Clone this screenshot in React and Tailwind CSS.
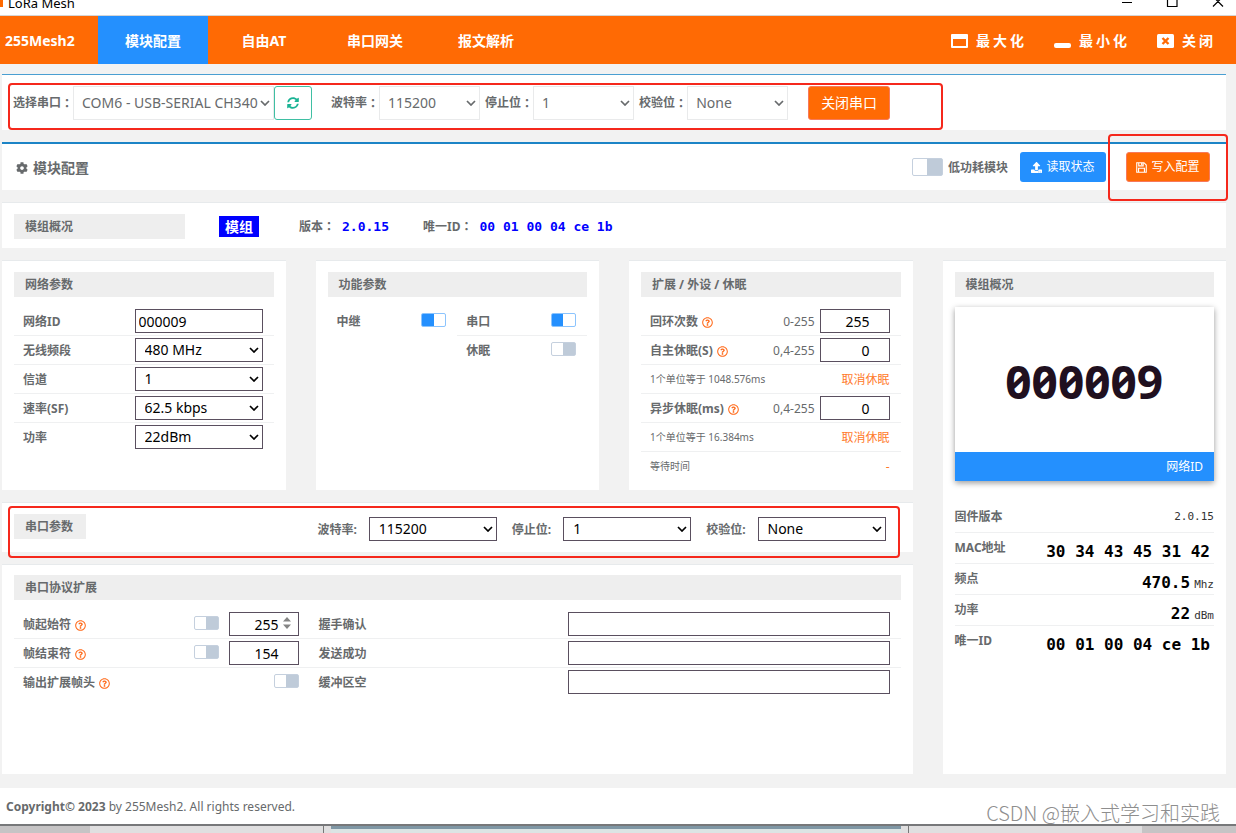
import { FaCog, FaRegQuestionCircle, FaSyncAlt, FaUpload } from "react-icons/fa";
import clsx from "clsx";

const TABS = ["模块配置", "自由AT", "串口网关", "报文解析"];

const NETWORK_SELECTS = [
  { id: "band", label: "无线频段", value: "480 MHz" },
  { id: "channel", label: "信道", value: "1" },
  { id: "rate", label: "速率(SF)", value: "62.5 kbps" },
  { id: "power", label: "功率", value: "22dBm" },
];

const STATUS = [
  { label: "固件版本", small: "2.0.15" },
  { label: "MAC地址", value: "30 34 43 45 31 42" },
  { label: "频点", value: "470.5", small: "Mhz" },
  { label: "功率", value: "22", small: "dBm" },
  { label: "唯一ID", value: "00 01 00 04 ce 1b" },
];

function Chevron({ className }) {
  return (
    <svg viewBox="0 0 10 6" className={clsx("pointer-events-none absolute h-[6px] w-[10px]", className)}>
      <path d="M1 1l4 4 4-4" fill="none" stroke="currentColor" strokeWidth="1.7" />
    </svg>
  );
}

// Light select used in the port toolbar
function PortSelect({ id, value, className }) {
  return (
    <div className={clsx("relative", className)}>
      <select
        id={id}
        className="h-[34px] w-full appearance-none border border-[#e9eaeb] bg-white pl-2 text-sm text-[#676a6c]"
      >
        <option>{value}</option>
      </select>
      <Chevron className="right-[4px] top-[14px]" />
    </div>
  );
}

// Dark bordered select used in the parameter forms
function FormSelect({ id, value }) {
  return (
    <div className="relative w-32 text-black">
      <select
        id={id}
        className="block h-6 w-full appearance-none border border-[#5a4f5f] bg-white pl-[9px] text-sm leading-5"
      >
        <option>{value}</option>
      </select>
      <Chevron className="right-[4px] top-[9px]" />
    </div>
  );
}

function NumberInput({ id, value, spinner }) {
  return (
    <div className="relative w-[70px]">
      <input
        id={id}
        type="number"
        defaultValue={value}
        className="block h-6 w-full border border-[#5a4f5f] bg-white pr-1 text-right text-sm text-black"
      />
      {spinner && (
        <svg viewBox="0 0 8 12" className="absolute right-2 top-[5px] h-3 w-2 text-[#858585]">
          <path d="M0 4.5L4 0l4 4.5zM0 7.5L4 12l4-4.5z" fill="currentColor" />
        </svg>
      )}
    </div>
  );
}

function Switch({ id, on, large }) {
  return (
    <input
      id={id}
      type="checkbox"
      role="switch"
      defaultChecked={on}
      className={clsx(
        "block shrink-0 appearance-none rounded-[2px] border border-[#c5d0de] bg-[linear-gradient(to_right,#fff_50%,#bfcbd9_50%)] checked:border-[#8cc4fd] checked:bg-[linear-gradient(to_right,#2490fe_50%,#fff_50%)]",
        large ? "h-[18px] w-[31px]" : "mb-[2px] h-[14px] w-[25px]"
      )}
    />
  );
}

function SaveIcon() {
  return (
    <svg viewBox="0 0 12 12" className="size-[11px]" fill="none" stroke="currentColor" strokeWidth="1.2">
      <path d="M.8.8h7.900l2.500 2.500v7.900H.8zM3 .8v3.400h4.800V.8M6.200 1v2.300M2.800 11.200V6.800h6.400v4.400" />
    </svg>
  );
}

function Colon() {
  return <span className="font-['Noto_Sans_CJK_TC',sans-serif]">：</span>;
}

function Panel({ className, children }) {
  return <section className={clsx("border-t border-[#e7eaec] bg-white px-3", className)}>{children}</section>;
}

function Heading({ className, children }) {
  return (
    <h2 className={clsx("h-[25px] bg-[#eee] pl-[11px] pr-[13px] font-bold leading-[26px]", className)}>{children}</h2>
  );
}

function Row({ last, children }) {
  return (
    <div
      className={clsx(
        "flex h-[29px] items-center border-b pl-[9px] pr-[11px]",
        last ? "border-transparent" : "border-[#eff0f1]"
      )}
    >
      {children}
    </div>
  );
}

function Label({ htmlFor, help, className, children }) {
  return (
    <label htmlFor={htmlFor} className={clsx("flex items-center pt-[2px] font-bold", className)}>
      {children}
      {help && <FaRegQuestionCircle className="ml-1 size-[11px] text-[#ff6a1a]" />}
    </label>
  );
}

// Red frame that highlights a group of controls
function Frame({ className }) {
  return <div className={clsx("pointer-events-none absolute z-10 rounded-[4px] border-2 border-[#f5281c]", className)} />;
}

function TitleBar() {
  return (
    <div className="flex h-4 justify-between overflow-hidden border-b border-[#d5d5d5] bg-white">
      <div className="flex items-end gap-[5px] pb-1 text-[13px] leading-4 text-black">
        <span className="mb-1 h-2 w-[3px] bg-[#ff6a00]" />
        LoRa Mesh
      </div>
      <svg viewBox="0 0 102 8" className="mr-3 h-2 w-[102px]" fill="none" stroke="#000" strokeWidth="1.2">
        <path d="M0 2.5h10M45.500-3v9.500h9.500v-9.500M91 6.500l10-10M101 6.500l-10-10" />
      </svg>
    </div>
  );
}

function Header() {
  return (
    <header className="flex h-12 items-stretch bg-[#ff6a04] text-sm font-bold text-white">
      <div className="flex w-[98px] items-center pl-[5px] pt-[2px]">255Mesh2</div>
      <nav className="flex gap-px">
        {TABS.map((tab, i) => (
          <button key={tab} className={clsx("w-[110px] pt-[2px] font-bold", i === 0 && "bg-[#2490fe]")}>
            {tab}
          </button>
        ))}
      </nav>
      <div className="ml-auto flex items-center gap-[27px] pr-5 pt-[2px]">
        <button className="flex items-center gap-2 font-bold tracking-[3px]">
          <svg viewBox="0 0 17 14" className="h-[14px] w-[17px]">
            <path fill="currentColor" fillRule="evenodd" d="M1 0h15a1 1 0 0 1 1 1v12a1 1 0 0 1-1 1H1a1 1 0 0 1-1-1V1a1 1 0 0 1 1-1zM2 5v7h13V5z" />
          </svg>
          最大化
        </button>
        <button className="flex items-center gap-2 font-bold tracking-[3px]">
          <svg viewBox="0 0 17 14" className="h-[14px] w-[17px]">
            <rect y="9" width="17" height="5" rx="2" fill="currentColor" />
          </svg>
          最小化
        </button>
        <button className="flex items-center gap-2 font-bold tracking-[3px]">
          <svg viewBox="0 0 17 14" className="h-[14px] w-[17px]">
            <rect width="17" height="14" rx="1.500" fill="currentColor" />
            <path d="M5.500 4l6 6M11.500 4l-6 6" stroke="#ff6a04" strokeWidth="2.400" />
          </svg>
          关闭
        </button>
      </div>
    </header>
  );
}

function PortBar() {
  return (
    <section className="relative flex h-14 items-start border-t border-[#4a9fd2] bg-white pl-[11px] pt-[11px]">
      <Frame className="left-[6px] top-[8px] h-[47px] w-[935px]" />
      <Label htmlFor="port" className="h-8">选择串口<Colon /></Label>
      <PortSelect id="port" value="COM6 - USB-SERIAL CH340" className="w-[201px]" />
      <button aria-label="刷新" className="flex h-[34px] w-[38px] items-center justify-center rounded-[3px] border border-[#3fbfa3] text-[#1ab394]">
        <FaSyncAlt className="size-3" />
      </button>
      <Label htmlFor="port-baud" className="ml-[19px] h-8">波特率<Colon /></Label>
      <PortSelect id="port-baud" value="115200" className="w-[101px]" />
      <Label htmlFor="port-stop" className="ml-[5px] h-8">停止位<Colon /></Label>
      <PortSelect id="port-stop" value="1" className="w-[101px]" />
      <Label htmlFor="port-parity" className="ml-[5px] h-8">校验位<Colon /></Label>
      <PortSelect id="port-parity" value="None" className="w-[101px]" />
      <button className="ml-5 h-[34px] w-[82px] rounded-[3px] border border-[#f8795a] bg-[#ff6a04] text-sm text-white">
        关闭串口
      </button>
    </section>
  );
}

function ActionBar() {
  return (
    <section className="relative mt-3 flex h-12 items-center border-t-2 border-[#1c84c6] bg-white pl-[14px] pr-4">
      <Frame className="-right-[2px] -top-[10px] h-[67px] w-[120px]" />
      <h1 className="flex items-center gap-[5px] pt-[2px] text-sm font-bold">
        <FaCog className="size-3" />
        模块配置
      </h1>
      <div className="ml-auto flex items-center gap-[5px]">
        <Switch id="low-power" large />
        <Label htmlFor="low-power">低功耗模块</Label>
      </div>
      <button className="ml-3 flex h-[30px] w-[86px] items-center justify-center gap-1 rounded-[3px] bg-[#2490fe] text-white">
        <FaUpload className="size-[11px]" />
        读取状态
      </button>
      <button className="ml-5 flex h-[30px] w-[84px] items-center justify-center gap-1 rounded-[3px] border border-[#f8795a] bg-[#ff6a04] text-white">
        <SaveIcon />
        写入配置
      </button>
    </section>
  );
}

function ModuleSummary() {
  const mono = "font-['DejaVu_Sans_Mono',monospace] text-[13px] font-bold text-[#00f]";
  return (
    <Panel className="mt-3 flex h-[46px] items-center pt-[2px]">
      <Heading className="w-[171px]">模组概况</Heading>
      <span className="ml-[34px] w-10 bg-[#00f] text-center text-sm font-bold leading-[21px] text-white">模组</span>
      <div className="ml-10 flex items-center gap-[7px] font-bold">
        <span>版本<Colon /></span>
        <span className={mono}>2.0.15</span>
      </div>
      <div className="ml-[34px] flex items-center gap-[7px] font-bold">
        <span>唯一ID<Colon /></span>
        <span className={mono}>00 01 00 04 ce 1b</span>
      </div>
    </Panel>
  );
}

function NetworkPanel() {
  return (
    <Panel className="h-[230px] pt-[11px]">
      <Heading className="mb-[10px]">网络参数</Heading>
      <Row>
        <Label htmlFor="net-id">网络ID</Label>
        <input
          id="net-id"
          defaultValue="000009"
          className="ml-auto h-6 w-32 border border-[#5a4f5f] bg-white pl-[3px] text-sm text-black"
        />
      </Row>
      {NETWORK_SELECTS.map(({ id, label, value }, i) => (
        <Row key={id} last={i === NETWORK_SELECTS.length - 1}>
          <Label htmlFor={id} className="mr-auto">{label}</Label>
          <FormSelect id={id} value={value} />
        </Row>
      ))}
    </Panel>
  );
}

function FeaturePanel() {
  return (
    <Panel className="h-[230px] pt-[11px]">
      <Heading className="mb-[10px]">功能参数</Heading>
      <div className="grid grid-cols-2">
        <Row last>
          <Label htmlFor="relay" className="mr-auto">中继</Label>
          <Switch id="relay" on />
        </Row>
        <Row>
          <Label htmlFor="serial" className="mr-auto">串口</Label>
          <Switch id="serial" on />
        </Row>
        <div className="col-start-2">
          <Row last>
            <Label htmlFor="sleep" className="mr-auto">休眠</Label>
            <Switch id="sleep" />
          </Row>
        </div>
      </div>
    </Panel>
  );
}

function SleepPanel() {
  const link = "ml-auto pt-[2px] text-[#ff7a2a]";
  const note = "pt-[2px] text-[10px]";
  const range = "ml-auto mr-[5px] pt-[2px]";
  return (
    <Panel className="h-[230px] pt-[11px]">
      <Heading className="mb-[10px]">扩展 / 外设 / 休眠</Heading>
      <Row>
        <Label htmlFor="loops" help>回环次数</Label>
        <span className={range}>0-255</span>
        <NumberInput id="loops" value="255" />
      </Row>
      <Row>
        <Label htmlFor="self-sleep" help>自主休眠(S)</Label>
        <span className={range}>0,4-255</span>
        <NumberInput id="self-sleep" value="0" />
      </Row>
      <Row>
        <span className={note}>1个单位等于 1048.576ms</span>
        <a href="#self-sleep" className={link}>取消休眠</a>
      </Row>
      <Row>
        <Label htmlFor="async-sleep" help>异步休眠(ms)</Label>
        <span className={range}>0,4-255</span>
        <NumberInput id="async-sleep" value="0" />
      </Row>
      <Row>
        <span className={note}>1个单位等于 16.384ms</span>
        <a href="#async-sleep" className={link}>取消休眠</a>
      </Row>
      <Row last>
        <span className={note}>等待时间</span>
        <span className={link}>-</span>
      </Row>
    </Panel>
  );
}

function SerialPanel() {
  return (
    <Panel className="relative flex h-[50px] items-start pt-[11px]">
      <Frame className="left-[6px] right-[13px] top-[3px] h-[52px]" />
      <Heading>串口参数</Heading>
      <div className="ml-auto flex items-center gap-3 pr-[15px] pt-[3px]">
        <Label htmlFor="baud">波特率:</Label>
        <FormSelect id="baud" value="115200" />
        <Label htmlFor="stop" className="ml-[3px]">停止位:</Label>
        <FormSelect id="stop" value="1" />
        <Label htmlFor="parity" className="ml-[3px]">校验位:</Label>
        <FormSelect id="parity" value="None" />
      </div>
    </Panel>
  );
}

function ProtocolPanel() {
  return (
    <Panel className="h-[210px] pt-[10px]">
      <Heading className="mb-[10px]">串口协议扩展</Heading>
      <div className="grid grid-cols-[1fr_2fr]">
        <Row>
          <Label htmlFor="frame-start" help className="mr-auto">帧起始符</Label>
          <Switch id="frame-start-on" />
          <div className="w-[10px]" />
          <NumberInput id="frame-start" value="255" spinner />
        </Row>
        <Row>
          <Label htmlFor="ack" className="mr-auto">握手确认</Label>
          <input id="ack" className="h-6 w-[322px] border border-[#5a4f5f] px-1 text-sm" />
        </Row>
        <Row>
          <Label htmlFor="frame-end" help className="mr-auto">帧结束符</Label>
          <Switch id="frame-end-on" />
          <div className="w-[10px]" />
          <NumberInput id="frame-end" value="154" />
        </Row>
        <Row>
          <Label htmlFor="sent" className="mr-auto">发送成功</Label>
          <input id="sent" className="h-6 w-[322px] border border-[#5a4f5f] px-1 text-sm" />
        </Row>
        <Row last>
          <Label htmlFor="frame-head" help className="mr-auto">输出扩展帧头</Label>
          <Switch id="frame-head" />
        </Row>
        <Row last>
          <Label htmlFor="buffer" className="mr-auto">缓冲区空</Label>
          <input id="buffer" className="h-6 w-[322px] border border-[#5a4f5f] px-1 text-sm" />
        </Row>
      </div>
    </Panel>
  );
}

function StatusPanel() {
  return (
    <Panel className="pt-[11px]">
      <Heading className="mb-[10px]">模组概况</Heading>
      <div className="bg-white shadow-[0_2px_6px_rgba(0,0,0,0.4)]">
        <div className="flex h-[145px] items-center justify-center pt-1 text-[46px] font-bold slashed-zero text-[#20101f]">
          000009
        </div>
        <div className="h-[29px] bg-[#2490fe] pr-[11px] text-right leading-[29px] text-white">网络ID</div>
      </div>
      <dl className="mt-[21px]">
        {STATUS.map(({ label, value, small }, i) => (
          <div
            key={label}
            className={clsx("flex h-[31px] justify-between", i < STATUS.length - 1 && "border-b border-[#eff0f1]")}
          >
            <dt className="font-bold leading-[30px]">{label}</dt>
            <dd className="flex items-baseline gap-1 font-['DejaVu_Sans_Mono',monospace] text-[11px] leading-[30px] text-[#333]">
              {value && <b className={clsx("pt-1 text-base leading-[30px] text-black", !small && "pr-1")}>{value}</b>}
              {small}
            </dd>
          </div>
        ))}
      </dl>
    </Panel>
  );
}

export default function App() {
  return (
    <div className="min-h-screen overflow-hidden bg-[#f2f2f2] font-['Noto_Sans','Noto_Sans_CJK_SC',sans-serif] text-xs text-[#676a6c]">
      <TitleBar />
      <Header />
      <main className="mb-[14px] ml-[2px] mr-[10px] mt-[10px]">
        <PortBar />
        <ActionBar />
        <ModuleSummary />
        <div className="mt-3 grid grid-cols-4 gap-x-[30px]">
          <div className="col-span-3 flex flex-col gap-3">
            <div className="grid grid-cols-3 gap-x-[30px]">
              <NetworkPanel />
              <FeaturePanel />
              <SleepPanel />
            </div>
            <SerialPanel />
            <ProtocolPanel />
          </div>
          <StatusPanel />
        </div>
      </main>
      <footer className="flex h-[38px] items-center justify-between border-b-2 border-[#77787a] bg-white pl-[6px] pr-4">
        <p className="pt-[2px]">
          <strong>Copyright© 2023</strong> by 255Mesh2. All rights reserved.
        </p>
        <p className="pt-[14px] font-['Noto_Sans_CJK_SC',sans-serif] text-xl font-light text-[#8e8e8e]">CSDN @嵌入式学习和实践</p>
      </footer>
      <div className="flex h-[7px] bg-[#e0dfe0]">
        <div className="w-[90px] bg-[#c6c4c5]" />
        <div className="w-[234px] border-r border-[#777]" />
        <div className="mx-[7px] flex-1 border-t-[3px] border-[#7f97a5] bg-[#dbe4e4]" />
        <div className="w-[234px] border-l border-[#777]" />
        <div className="w-[94px] bg-[#c6c4c5]" />
      </div>
    </div>
  );
}
